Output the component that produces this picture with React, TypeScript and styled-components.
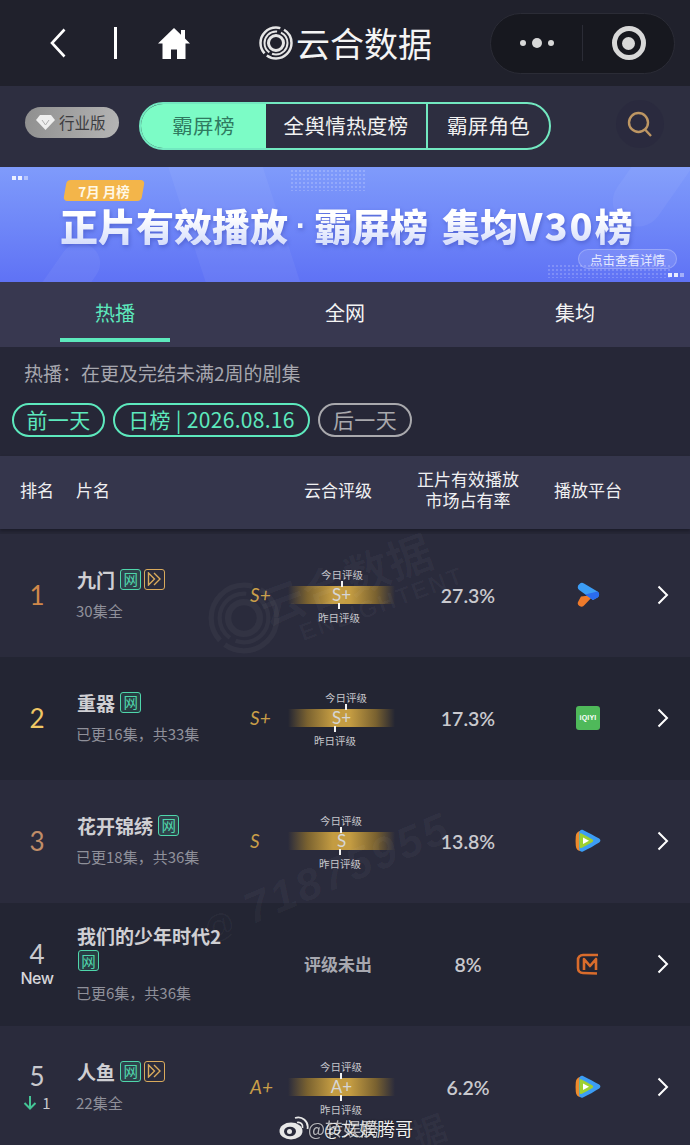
import React from 'react';
import styled, { createGlobalStyle } from 'styled-components';

const GlobalStyle = createGlobalStyle`
  html, body {
    margin: 0;
    padding: 0;
    background: #262737;
  }
  * {
    box-sizing: border-box;
  }
`;

const Page = styled.div`
  position: relative;
  width: 690px;
  height: 1145px;
  overflow: hidden;
  background: #262737;
  font-family: 'Noto Sans CJK SC', 'Noto Sans', sans-serif;
  color: #fff;
`;

/* top mini program bar */
const NavBar = styled.div`
  height: 86px;
  background: #20212c;
  display: flex;
  align-items: center;
  padding: 0 15px 0 50px;
`;

const NavDivider = styled.div`
  width: 3px;
  height: 32px;
  margin: 0 41px 0 48px;
  background: #fff;
`;

const NavTitle = styled.div`
  display: flex;
  align-items: center;
  gap: 3px;
  margin-left: 69px;
  font-size: 34px;
  line-height: 40px;
  color: #f4f4f4;
`;

const Capsule = styled.div`
  margin-left: auto;
  width: 185px;
  height: 61px;
  border-radius: 31px;
  background: #17181f;
  border: 1px solid #2b2c36;
  display: grid;
  grid-template-columns: 92px 1fr;
  align-items: center;
`;

const CapsuleDots = styled.div`
  height: 36px;
  border-right: 1px solid #2b2c36;
  display: flex;
  align-items: center;
  justify-content: center;
  gap: 6px;
`;

const Dot = styled.span<{ $size: number }>`
  width: ${(p) => p.$size}px;
  height: ${(p) => p.$size}px;
  border-radius: 50%;
  background: #d8d8d8;
`;

const CapsuleRecord = styled.div`
  display: flex;
  justify-content: center;
`;

const RecordRing = styled.div`
  width: 34px;
  height: 34px;
  border-radius: 50%;
  border: 5px solid #d8d8d8;
  display: flex;
  align-items: center;
  justify-content: center;

  &::after {
    content: '';
    width: 13px;
    height: 13px;
    border-radius: 50%;
    background: #d8d8d8;
  }
`;

/* board switcher */
const SwitchBar = styled.div`
  height: 81px;
  background: #2d2e40;
  display: flex;
  align-items: center;
  padding: 0 26px 0 25px;
`;

const VipBadge = styled.div`
  width: 94px;
  height: 31px;
  border-radius: 16px;
  background: linear-gradient(100deg, #8f8f8f, #b5b5b5);
  display: flex;
  align-items: center;
  gap: 4px;
  padding: 0 0 1px 11px;
  margin-bottom: 8px;
  font-size: 15.5px;
  color: #3c3c40;
`;

const Segments = styled.div`
  margin: 0 0 2px 20px;
  width: 412px;
  height: 48px;
  border: 2px solid #72e8c0;
  border-radius: 24px;
  overflow: hidden;
  display: grid;
  grid-template-columns: 125px 160px 1fr;
`;

const Segment = styled.div<{ $active?: boolean }>`
  display: flex;
  align-items: center;
  justify-content: center;
  padding-bottom: 2px;
  font-size: 20.5px;
  letter-spacing: 0.3px;
  background: ${(p) => (p.$active ? '#7cfcc6' : 'transparent')};
  color: ${(p) => (p.$active ? '#2f7a60' : '#f2f2f2')};
  border-left: ${(p) => (p.$active ? 'none' : '2px solid #72e8c0')};

  &:nth-child(2) {
    border-left: none;
  }
`;

const SearchButton = styled.div`
  margin: 0 0 5px auto;
  width: 48px;
  height: 48px;
  border-radius: 50%;
  background: #2a2a3e;
  display: flex;
  align-items: center;
  justify-content: center;
`;

/* banner */
const Banner = styled.div`
  position: relative;
  height: 115px;
  overflow: hidden;
  background: linear-gradient(180deg, #7f9bfb 0%, #6f87f8 50%, #5f72f5 100%);
  padding: 13px 0 0 60px;
`;

const BannerShape = styled.div<{ $kind: string }>`
  position: absolute;
  background: rgba(255, 255, 255, 0.05);
  ${(p) =>
    p.$kind === 'right'
      ? 'right: 10px; top: -45px; width: 50px; height: 110px; border-radius: 25px; transform: rotate(35deg);'
      : p.$kind === 'left'
        ? 'left: 40px; top: 70px; width: 40px; height: 110px; border-radius: 20px; transform: rotate(35deg);'
        : 'left: 190px; top: -60px; width: 90px; height: 240px; border-radius: 45px; transform: rotate(-18deg);'}
`;

const BannerGrid = styled.div<{ $bottom?: boolean }>`
  position: absolute;
  background-image: radial-gradient(rgba(255, 255, 255, 0.4) 0.6px, transparent 0.8px);
  background-size: 4px 4px;
  ${(p) =>
    p.$bottom
      ? 'right: 18px; bottom: 4px; width: 125px; height: 14px;'
      : 'left: 290px; top: 2px; width: 75px; height: 22px;'}
`;

const BannerDots = styled.div<{ $bottom?: boolean }>`
  position: absolute;
  display: flex;
  gap: 2px;
  ${(p) => (p.$bottom ? 'right: 6px; bottom: 5px;' : 'left: 12px; top: 9px;')}

  span {
    width: 4px;
    height: 4px;
    background: rgba(255, 255, 255, 0.85);
  }

  span:last-child {
    opacity: 0.5;
  }
`;

const BannerTag = styled.div`
  position: relative;
  width: 78px;
  height: 21px;
  margin-left: 5px;
  display: flex;
  align-items: center;
  justify-content: center;
  font-size: 13.5px;
  line-height: 18px;
  font-weight: 700;
  color: #fff8e6;

  &::before {
    content: '';
    position: absolute;
    inset: 0;
    border-radius: 4px;
    background: #f3b54a;
    transform: skewX(-10deg);
  }

  span {
    position: relative;
  }
`;

const BannerTitle = styled.div`
  position: relative;
  margin-top: 4px;
  display: flex;
  align-items: center;
  font-size: 38px;
  line-height: 40px;
  font-weight: 900;
  white-space: nowrap;
  background: linear-gradient(180deg, #ffffff 30%, #d4dcfb 100%);
  -webkit-background-clip: text;
  background-clip: text;
  color: transparent;
  filter: drop-shadow(1px 2px 2px rgba(50, 65, 170, 0.45));

  b {
    width: 26px;
    text-align: center;
    font-family: 'Liberation Sans', sans-serif;
    font-size: 32px;
    font-weight: 700;
  }

  i {
    width: 14px;
  }

  em {
    font-style: normal;
    letter-spacing: 2px;
  }
`;

const BannerButton = styled.div`
  position: absolute;
  right: 13px;
  bottom: 13px;
  width: 99px;
  height: 20px;
  border-radius: 10px;
  border: 1px solid rgba(255, 255, 255, 0.22);
  background: rgba(255, 255, 255, 0.12);
  display: flex;
  align-items: center;
  justify-content: center;
  font-size: 12.5px;
  color: #e6eaff;
`;

/* tabs */
const Tabs = styled.div`
  height: 65px;
  background: #383850;
  display: grid;
  grid-template-columns: repeat(3, 230px);
`;

const Tab = styled.div<{ $active?: boolean }>`
  position: relative;
  display: flex;
  justify-content: center;
  padding-top: 16px;
  font-size: 20px;
  line-height: 30px;
  color: ${(p) => (p.$active ? '#5de9bd' : '#f4f4f4')};

  ${(p) =>
    p.$active &&
    `&::after {
      content: '';
      position: absolute;
      left: 60px;
      bottom: 5px;
      width: 110px;
      height: 4px;
      background: #5de9bd;
    }`}
`;

/* note and date */
const NotePanel = styled.div`
  height: 109px;
  padding: 12px 12px 0;
`;

const Note = styled.div`
  padding-left: 12px;
  font-size: 19px;
  line-height: 28px;
  color: #a7a7af;
`;

const DateRow = styled.div`
  display: flex;
  gap: 8px;
  margin-top: 16px;
`;

const DatePill = styled.div<{ $muted?: boolean; $width: number }>`
  width: ${(p) => p.$width}px;
  height: 34px;
  border-radius: 17px;
  border: 2px solid ${(p) => (p.$muted ? '#a9a9ad' : '#5de9bd')};
  display: flex;
  align-items: center;
  justify-content: center;
  padding-bottom: 2px;
  font-size: 21px;
  letter-spacing: 0.3px;
  color: ${(p) => (p.$muted ? '#a9a9ad' : '#5de9bd')};
`;

/* table */
const rowColumns = '74px 170px 156px 136px 104px 50px';

const TableHead = styled.div`
  height: 73px;
  background: #35364c;
  display: grid;
  grid-template-columns: ${rowColumns};
  align-items: center;
  padding-bottom: 7px;
  font-size: 17px;
  line-height: 21px;
  color: #f0f0f2;
  box-shadow: 0 2px 3px rgba(15, 15, 25, 0.45);
  margin-bottom: 5px;
`;

const HeadCell = styled.div<{ $left?: boolean; $shift?: number }>`
  text-align: ${(p) => (p.$left ? 'left' : 'center')};
  padding-left: ${(p) => (p.$left ? '2px' : '0')};
  margin-left: ${(p) => p.$shift ?? 0}px;
`;

const Row = styled.div<{ $odd: boolean }>`
  height: 123px;
  padding-bottom: 2px;
  background: ${(p) => (p.$odd ? '#2a2b3c' : '#232533')};
  display: grid;
  grid-template-columns: ${rowColumns};
  align-items: center;
`;

const RankCell = styled.div`
  display: flex;
  flex-direction: column;
  align-items: center;
`;

const RankNumber = styled.div<{ $color: string }>`
  font-size: 26px;
  line-height: 30px;
  font-family: 'Lato', 'Noto Sans', sans-serif;
  color: ${(p) => p.$color};
`;

const RankNew = styled.div`
  font-size: 16px;
  line-height: 19px;
  font-family: 'Inter', sans-serif;
  font-weight: 500;
  letter-spacing: -0.5px;
  color: #d6d6da;
`;

const RankMove = styled.div`
  display: flex;
  align-items: center;
  gap: 5px;
  margin-top: 2px;
  font-size: 15px;
  line-height: 20px;
  color: #c9c9ce;
`;

const TitleCell = styled.div`
  padding-left: 2px;
`;

const ShowName = styled.div`
  font-size: 19px;
  line-height: 25px;
  font-weight: 700;
  color: #cfcfd3;
  padding-left: 1px;
`;

const TagBox = styled.span<{ $gold?: boolean }>`
  display: inline-flex;
  align-items: center;
  justify-content: center;
  width: 21px;
  height: 21px;
  margin: 2px 0 0 ${(p) => (p.$gold ? '3px' : '1px')};
  vertical-align: top;
  border-radius: 3px;
  border: 1.5px solid ${(p) => (p.$gold ? '#d9aa5c' : '#4fd6ab')};
  background: ${(p) => (p.$gold ? 'transparent' : 'rgba(79, 214, 171, 0.14)')};
  color: #4fd6ab;
  font-size: 14.5px;
  line-height: 1;
  font-weight: 400;
`;

const ShowMeta = styled.div`
  margin-top: 8.5px;
  font-size: 15px;
  line-height: 22px;
  color: #8f909a;
  white-space: nowrap;
`;

const RatingCell = styled.div`
  display: flex;
  align-items: center;
`;

const RatingGrade = styled.div`
  width: 44px;
  padding-left: 6px;
  font-size: 19px;
  font-style: italic;
  font-family: 'Lato', 'Noto Sans', sans-serif;
  color: #c99e48;
`;

const RatingScale = styled.div`
  width: 107px;
  padding-top: 2px;
  display: flex;
  flex-direction: column;
`;

const ScaleLabel = styled.div<{ $at: number }>`
  width: 50px;
  margin-left: ${(p) => p.$at - 25}px;
  text-align: center;
  font-size: 10.5px;
  line-height: 15px;
  color: #c6c6cc;
  white-space: nowrap;
`;

const ScaleBar = styled.div`
  position: relative;
  height: 18px;
  margin: 4.5px 0 5.5px;
  background: linear-gradient(90deg, rgba(184, 146, 58, 0), #7a6230 18%, #c49c42 42%, #c49c42 58%, #7a6230 82%, rgba(184, 146, 58, 0));
  display: flex;
  align-items: center;
  justify-content: center;
  font-size: 17px;
  line-height: 18px;
  font-family: 'Lato', 'Noto Sans', sans-serif;
  color: #d6d6d6;
`;

const ScaleTick = styled.span<{ $at: number; $top?: boolean }>`
  position: absolute;
  left: ${(p) => p.$at - 1}px;
  ${(p) => (p.$top ? 'top: -5px;' : 'bottom: -5px;')}
  width: 2px;
  height: 6px;
  background: #f2f2f2;
`;

const NoRating = styled.div`
  flex: 1;
  padding-left: 32px;
  text-align: center;
  font-size: 17px;
  font-weight: 700;
  color: #a7a8b0;
`;

const Share = styled.div`
  margin-top: 1px;
  text-align: center;
  font-size: 19.5px;
  font-weight: 600;
  font-family: 'Lato', 'Noto Sans', sans-serif;
  color: #c9c9ce;
`;

const PlatformCell = styled.div`
  display: flex;
  justify-content: center;
`;

const IqiyiBadge = styled.div`
  width: 24px;
  height: 24px;
  border-radius: 3px;
  background: #4fb95a;
  display: flex;
  align-items: center;
  justify-content: center;
  font-family: 'Liberation Sans', sans-serif;
  font-size: 7px;
  font-weight: 700;
  letter-spacing: 0.2px;
  color: #fff;
`;

const ArrowCell = styled.div`
  display: flex;
  justify-content: center;
  padding-right: 4px;
`;

/* faint marks that lie over the list */
const Watermark = styled.div`
  position: absolute;
  pointer-events: none;
  color: rgba(255, 255, 255, 0.03);
  white-space: nowrap;
`;

const BrandMark = styled(Watermark)`
  left: 255px;
  top: 545px;
  transform: rotate(-20deg);
  font-size: 45px;
  font-weight: 700;
`;

const BrandEnglish = styled(Watermark)`
  left: 295px;
  top: 590px;
  transform: rotate(-20deg);
  font-size: 24px;
  font-weight: 700;
  letter-spacing: 2px;
  font-family: 'Liberation Sans', sans-serif;
`;

const BrandRings = styled(Watermark)`
  left: 208px;
  top: 582px;
`;

const LowMark = styled(Watermark)`
  left: 412px;
  top: 1110px;
  transform: rotate(-20deg);
  font-size: 34px;
  line-height: 40px;
  font-weight: 700;
`;

const UserNumber = styled(Watermark)`
  left: 256px;
  top: 884px;
  transform: rotate(-23deg);
  transform-origin: left bottom;
  font-size: 44px;
  line-height: 50px;
  font-style: italic;
  font-weight: 700;
  font-family: 'Liberation Sans', sans-serif;
  letter-spacing: 3px;
  color: rgba(255, 255, 255, 0.04);
`;

const UserAt = styled(Watermark)`
  left: 203px;
  top: 906px;
  transform: rotate(-23deg);
  font-size: 32px;
  line-height: 40px;
  font-family: 'Liberation Sans', sans-serif;
`;

const WeiboMark = styled.div`
  position: absolute;
  left: 279px;
  top: 1116px;
  display: flex;
  align-items: center;
  pointer-events: none;
  font-size: 18px;
  line-height: 24px;
  color: #eeeeee;
  text-shadow: 0 0 2px rgba(0, 0, 0, 0.7);
`;

const WeiboText = styled.span`
  position: relative;
  margin-left: 14px;
  white-space: nowrap;
`;

const WeiboGhost = styled.span`
  position: absolute;
  left: -16px;
  top: 0;
  opacity: 0.7;
`;

const Logo = ({ size, color }: { size: number; color: string }) => (
  <svg width={size} height={size} viewBox="0 0 34 34" fill="none" stroke={color}>
    <circle cx="17" cy="17" r="15.500" strokeWidth="2.500" strokeDasharray="34 3 40 4 16" />
    <circle cx="17" cy="17" r="11.500" strokeWidth="2" strokeDasharray="22 3 30 4" />
    <circle cx="17" cy="17" r="7.500" strokeWidth="3" />
  </svg>
);

const Diamond = () => (
  <svg width="19" height="16" viewBox="0 0 19 16">
    <path d="M4 1h11l4 5-9.500 10L0 6z" fill="#eeeeee" />
    <path d="M6 6l3.500 5L13 6" fill="none" stroke="#b0b0b0" strokeWidth="1" />
  </svg>
);

const Chevron = () => (
  <svg width="12" height="20" viewBox="0 0 12 20" fill="none" stroke="#fff" strokeWidth="2">
    <path d="M1.500 1.500L10 10l-8.500 8.500" />
  </svg>
);

const DoubleArrow = () => (
  <svg width="15" height="14" viewBox="0 0 15 14" fill="none" stroke="#d9aa5c" strokeWidth="1.400">
    <path d="M1.500 1v12L7.500 7z" />
    <path d="M7 1l6 6-6 6" />
  </svg>
);

const Youku = () => (
  <svg width="24" height="26" viewBox="0 0 24 26">
    <path d="M5 14.500l13 -1.500 -9.500 10a3.600 3.600 0 0 1-6-4z" fill="#ee7a2b" />
    <path d="M3.500 2a3.500 3.500 0 0 1 4.500-.6l13.500 8.200a3.400 3.400 0 0 1 0 5.800L17 18 3.200 8a3.600 3.600 0 0 1 .3-6z" fill="#3c9df5" />
    <path d="M21.500 9.600a3.400 3.400 0 0 1 0 5.800L17 18 9 12.500z" fill="#2a6cf0" />
  </svg>
);

const Tencent = () => (
  <svg width="26" height="24" viewBox="0 0 26 24">
    <path d="M6 2C3 2 1 4 .8 7c-.3 3.400-.3 6.600 0 10 .2 3 2.200 5 5.200 5z" fill="#ee8a2b" />
    <path d="M8 1c-1.700-.8-3.500.3-3.700 2.200-.5 5.600-.5 11.400 0 17 .2 1.900 2 3 3.700 2.200 6-2.800 11-5.800 16.200-9 1.600-1 1.600-2.800 0-3.800C19 6.800 14 3.800 8 1z" fill="#3c9df5" />
    <path d="M6.500 4.500c-.9-.4-1.800.2-1.900 1.200-.3 4-.3 8 0 12 .1 1 1 1.600 1.900 1.200 4-1.900 7.500-4 11-6 .9-.6.9-1.700 0-2.300-3.500-2.100-7-4.200-11-6.100z" fill="#9ed02f" />
    <path d="M8 8.500v6.500l6-3.200z" fill="#fff" />
  </svg>
);

const Mango = () => (
  <svg width="24" height="24" viewBox="0 0 24 24" fill="none" stroke="#d96c2c" strokeWidth="2.600" strokeLinejoin="round">
    <path d="M22 3H7C4 3 2 5 2 8v8c0 3 2 5 5 5l14 .5" />
    <path d="M8 18V7l6 7 6-7v11" />
  </svg>
);

type Rating = { grade: string; today: number; yesterday: number };

type Show = {
  rank: number;
  rankColor: string;
  badge?: React.ReactNode;
  name: string;
  gold: boolean;
  meta: string;
  rating?: Rating;
  share: string;
  platform: React.ReactNode;
};

const shows: Show[] = [
  {
    rank: 1,
    rankColor: '#d0884a',
    name: '九门',
    gold: true,
    meta: '30集全',
    rating: { grade: 'S+', today: 54, yesterday: 51 },
    share: '27.3%',
    platform: <Youku />,
  },
  {
    rank: 2,
    rankColor: '#efc765',
    name: '重器',
    gold: false,
    meta: '已更16集，共33集',
    rating: { grade: 'S+', today: 58, yesterday: 47 },
    share: '17.3%',
    platform: <IqiyiBadge>iQIYI</IqiyiBadge>,
  },
  {
    rank: 3,
    rankColor: '#c08d68',
    name: '花开锦绣',
    gold: false,
    meta: '已更18集，共36集',
    rating: { grade: 'S', today: 53, yesterday: 52 },
    share: '13.8%',
    platform: <Tencent />,
  },
  {
    rank: 4,
    rankColor: '#c9c9ce',
    badge: <RankNew>New</RankNew>,
    name: '我们的少年时代2',
    gold: false,
    meta: '已更6集，共36集',
    share: '8%',
    platform: <Mango />,
  },
  {
    rank: 5,
    rankColor: '#c9c9ce',
    badge: (
      <RankMove>
        <svg width="14" height="15" viewBox="0 0 14 15" fill="none" stroke="#44c596" strokeWidth="2">
          <path d="M7 1v12M1.500 8L7 13.500 12.500 8" />
        </svg>
        1
      </RankMove>
    ),
    name: '人鱼',
    gold: true,
    meta: '22集全',
    rating: { grade: 'A+', today: 53, yesterday: 53 },
    share: '6.2%',
    platform: <Tencent />,
  },
];

const App = () => {
  return (
    <Page>
      <GlobalStyle />
      <NavBar>
        <svg width="16" height="30" viewBox="0 0 16 30" fill="none" stroke="#fff" strokeWidth="2.600">
          <path d="M14.500 1.500L2 15l12.500 13.500" />
        </svg>
        <NavDivider />
        <svg width="32" height="31" viewBox="0 0 32 31" fill="#fff">
          <path d="M16 0L0 15.500h4.500V31H13v-9.500h6V31h8.500V15.500H32L27 10.600V2h-4v4.700z" />
        </svg>
        <NavTitle>
          <Logo size={34} color="#e6e6e6" />
          云合数据
        </NavTitle>
        <Capsule>
          <CapsuleDots>
            <Dot $size={6} />
            <Dot $size={10} />
            <Dot $size={6} />
          </CapsuleDots>
          <CapsuleRecord>
            <RecordRing />
          </CapsuleRecord>
        </Capsule>
      </NavBar>

      <SwitchBar>
        <VipBadge>
          <Diamond />
          行业版
        </VipBadge>
        <Segments>
          <Segment $active>霸屏榜</Segment>
          <Segment>全舆情热度榜</Segment>
          <Segment>霸屏角色</Segment>
        </Segments>
        <SearchButton>
          <svg width="26" height="27" viewBox="0 0 26 27" fill="none" stroke="#bd9663" strokeWidth="2.400">
            <circle cx="11.500" cy="11.500" r="9.500" />
            <path d="M18 18.500l6 6.500" />
          </svg>
        </SearchButton>
      </SwitchBar>

      <Banner>
        <BannerShape $kind="right" />
        <BannerShape $kind="left" />
        <BannerShape $kind="middle" />
        <BannerGrid />
        <BannerGrid $bottom />
        <BannerDots>
          <span />
          <span />
          <span />
        </BannerDots>
        <BannerDots $bottom>
          <span />
          <span />
          <span />
        </BannerDots>
        <BannerTag>
          <span>7月 月榜</span>
        </BannerTag>
        <BannerTitle>
          正片有效播放
          <b>·</b>
          霸屏榜
          <i />
          集均<em>V30</em>榜
        </BannerTitle>
        <BannerButton>点击查看详情</BannerButton>
      </Banner>

      <Tabs>
        <Tab $active>热播</Tab>
        <Tab>全网</Tab>
        <Tab>集均</Tab>
      </Tabs>

      <NotePanel>
        <Note>热播：在更及完结未满2周的剧集</Note>
        <DateRow>
          <DatePill $width={93}>前一天</DatePill>
          <DatePill $width={197}>日榜 | 2026.08.16</DatePill>
          <DatePill $width={94} $muted>
            后一天
          </DatePill>
        </DateRow>
      </NotePanel>

      <TableHead>
        <HeadCell>排名</HeadCell>
        <HeadCell $left>片名</HeadCell>
        <HeadCell $shift={32}>云合评级</HeadCell>
        <HeadCell>
          正片有效播放
          <br />
          市场占有率
        </HeadCell>
        <HeadCell>播放平台</HeadCell>
      </TableHead>

      {shows.map((show, index) => (
        <Row key={show.rank} $odd={index % 2 === 0}>
          <RankCell>
            <RankNumber $color={show.rankColor}>{show.rank}</RankNumber>
            {show.badge}
          </RankCell>
          <TitleCell>
            <ShowName>
              {show.name} <TagBox>网</TagBox>
              {show.gold && (
                <TagBox $gold>
                  <DoubleArrow />
                </TagBox>
              )}
            </ShowName>
            <ShowMeta>{show.meta}</ShowMeta>
          </TitleCell>
          <RatingCell>
            {show.rating ? (
              <>
                <RatingGrade>{show.rating.grade}</RatingGrade>
                <RatingScale>
                  <ScaleLabel $at={show.rating.today}>今日评级</ScaleLabel>
                  <ScaleBar>
                    <ScaleTick $at={show.rating.today} $top />
                    {show.rating.grade}
                    <ScaleTick $at={show.rating.yesterday} />
                  </ScaleBar>
                  <ScaleLabel $at={show.rating.yesterday}>昨日评级</ScaleLabel>
                </RatingScale>
              </>
            ) : (
              <NoRating>评级未出</NoRating>
            )}
          </RatingCell>
          <Share>{show.share}</Share>
          <PlatformCell>{show.platform}</PlatformCell>
          <ArrowCell>
            <Chevron />
          </ArrowCell>
        </Row>
      ))}

      <BrandRings>
        <Logo size={72} color="rgba(255, 255, 255, 0.04)" />
      </BrandRings>
      <BrandMark>云合数据</BrandMark>
      <BrandEnglish>ENLIGHTENT</BrandEnglish>
      <UserAt>@</UserAt>
      <UserNumber>71875955</UserNumber>
      <LowMark>据</LowMark>

      <WeiboMark>
        <svg width="31" height="24" viewBox="0 0 31 24">
          <ellipse cx="12" cy="15" rx="11.500" ry="8.500" fill="#e8e8e8" />
          <ellipse cx="11" cy="15.500" rx="6" ry="4.800" fill="#2a2b3c" />
          <circle cx="10.500" cy="15.500" r="2.500" fill="#e8e8e8" />
          <path d="M16 2c7-2.500 14 3.500 12.500 11" fill="none" stroke="#e8e8e8" strokeWidth="1.800" />
          <path d="M18 6.500c3.500-.9 6.500 2 5.500 5.500" fill="none" stroke="#e8e8e8" strokeWidth="1.800" />
        </svg>
        <WeiboText>
          <WeiboGhost>@转娱腾</WeiboGhost>
          @文娱腾哥
        </WeiboText>
      </WeiboMark>
    </Page>
  );
};

export default App;
